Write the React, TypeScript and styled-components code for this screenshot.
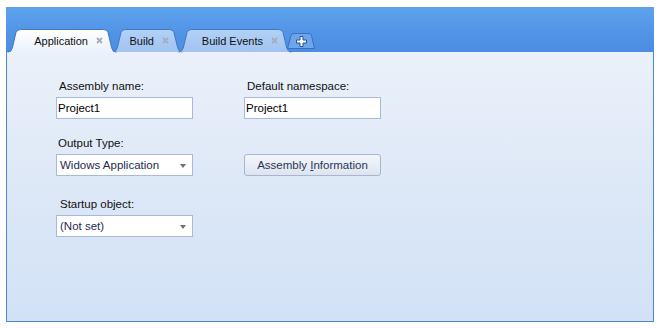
import React from "react";
import styled, { createGlobalStyle } from "styled-components";

const Global = createGlobalStyle`
  html, body { margin: 0; padding: 0; background: #ffffff; }
  body { font-family: "Liberation Sans", Arial, sans-serif; font-size: 11px; }
`;

const Page = styled.div`
  padding: 7px 6px 0 6px;
  width: 659px;
  height: 328px;
  box-sizing: border-box;
`;

const Panel = styled.div`
  width: 648px;
  height: 315px;
  display: flex;
  flex-direction: column;
  box-sizing: border-box;
`;

const Header = styled.div`
  height: 45px;
  background: linear-gradient(#5ea1ed 0%, #5497e8 45%, #4a8de2 100%);
  display: flex;
  align-items: flex-end;
  padding-left: 1px;
`;

const TabStrip = styled.div`
  display: flex;
  align-items: flex-end;
  height: 23px;
`;

const TabBox = styled.div<{ $w: number; $active?: boolean; $first?: boolean }>`
  position: relative;
  width: ${(p) => p.$w}px;
  height: 23px;
  margin-left: ${(p) => (p.$first ? 0 : -5)}px;
  z-index: ${(p) => (p.$active ? 3 : 1)};
  display: flex;
  align-items: center;
  justify-content: flex-end;
  box-sizing: border-box;
  padding-right: 14px;
  gap: 8px;
  color: #101010;
  font-size: 11px;
`;

const TabShape = styled.svg`
  position: absolute;
  left: 0;
  top: 0;
  z-index: -1;
  overflow: visible;
`;

const TabLabel = styled.span`
  position: relative;
  white-space: nowrap;
`;

const CloseIcon = styled.svg`
  position: relative;
  flex: none;
`;

const PlusTab = styled.div`
  position: relative;
  z-index: 0;
  width: 28px;
  height: 16px;
  margin-left: -5px;
  margin-bottom: 3px;
  display: flex;
  align-items: center;
  justify-content: center;
`;

const PlusIcon = styled.svg`
  position: relative;
`;

const Content = styled.div`
  flex: 1;
  background: linear-gradient(#eaf1fa 0%, #dde8f7 50%, #d2e2f6 100%);
  border: 1px solid #4a87d8;
  border-top: none;
  padding: 27px 0 0 49px;
  display: grid;
  grid-template-columns: 137px 137px;
  column-gap: 51px;
  align-content: start;
`;

const Field = styled.div<{ $top?: number }>`
  display: flex;
  flex-direction: column;
  margin-top: ${(p) => p.$top ?? 0}px;
`;

const Label = styled.label<{ $indent?: number; $hidden?: boolean }>`
  font-size: 11.5px;
  line-height: 14px;
  color: #111;
  padding-left: ${(p) => p.$indent ?? 2}px;
  margin-bottom: 4px;
  white-space: nowrap;
  visibility: ${(p) => (p.$hidden ? "hidden" : "visible")};
`;

const TextBox = styled.div`
  height: 22px;
  box-sizing: border-box;
  border: 1px solid #a9bad6;
  background: #ffffff;
  display: flex;
  align-items: center;
  padding-left: 1px;
  font-size: 11.5px;
  color: #000;
`;

const Combo = styled(TextBox)`
  padding-left: 3px;
  padding-right: 6px;
  justify-content: space-between;
  color: #1f2b4d;
`;

const Arrow = styled.span`
  width: 0;
  height: 0;
  border-left: 3.5px solid transparent;
  border-right: 3.5px solid transparent;
  border-top: 4px solid #707070;
  margin-top: 1px;
`;

const Button = styled.div`
  height: 22px;
  box-sizing: border-box;
  border: 1px solid #a7b6ce;
  border-radius: 3px;
  background: linear-gradient(#f3f6fb 0%, #e8eef7 50%, #dce4f0 100%);
  display: flex;
  align-items: center;
  justify-content: center;
  font-size: 11.5px;
  color: #2a3656;
  u { text-decoration: underline; }
`;

function tabPath(w: number, h: number, closed: boolean) {
  const d = `M0.5,${h} C3,${h} 4.5,${h - 1.5} 5.5,${h - 5} L9,3.5 Q10,0.5 13.5,0.5 L${w - 13.5},0.5 Q${w - 10},0.5 ${w - 9},3.5 L${w - 5.5},${h - 5} C${w - 4.5},${h - 1.5} ${w - 3},${h} ${w - 0.5},${h}`;
  return closed ? d + " Z" : d;
}

const Tab: React.FC<{ label: string; w: number; active?: boolean; first?: boolean }> = ({ label, w, active, first }) => {
  const h = 23;
  const id = `g-${label.replace(/\s/g, "")}`;
  return (
    <TabBox $w={w} $active={active} $first={first}>
      <TabShape width={w} height={h} viewBox={`0 0 ${w} ${h}`}>
        <defs>
          <linearGradient id={id} x1="0" y1="0" x2="0" y2="1">
            {active ? (
              <>
                <stop offset="0" stopColor="#ffffff" />
                <stop offset="1" stopColor="#eaf1fa" />
              </>
            ) : (
              <>
                <stop offset="0" stopColor="#b3d1f6" />
                <stop offset="1" stopColor="#a0c3f0" />
              </>
            )}
          </linearGradient>
        </defs>
        <path d={tabPath(w, h + (active ? 1 : 0), true)} fill={`url(#${id})`} stroke="none" />
        <path d={tabPath(w, h, false)} fill="none" stroke={active ? "#4377c4" : "#3f76c6"} strokeWidth="1" />
      </TabShape>
      <TabLabel>{label}</TabLabel>
      <CloseIcon width="7" height="7" viewBox="0 0 7 7">
        <path d="M1,1 L6,6 M6,1 L1,6" stroke="#a3adbb" strokeWidth="1.8" />
      </CloseIcon>
    </TabBox>
  );
};

export default function App() {
  return (
    <>
      <Global />
      <Page>
        <Panel>
          <Header>
            <TabStrip>
              <Tab label="Application" w={110} active first />
              <Tab label="Build" w={71} />
              <Tab label="Build Events" w={114} />
              <PlusTab>
                <TabShape width="28" height="16" viewBox="0 0 28 16">
                  <path
                    d="M0.5,15.5 L4,2.5 Q4.5,0.5 7,0.5 L22,0.5 Q24,0.5 24.5,2.5 L27.5,15.5 Z"
                    fill="#6da5ec"
                    stroke="#3a6fc0"
                  />
                </TabShape>
                <PlusIcon width="11" height="11" viewBox="0 0 11 11">
                  <path
                    d="M4,0.5 H7 V4 H10.5 V7 H7 V10.5 H4 V7 H0.5 V4 H4 Z"
                    fill="#ffffff"
                    stroke="#2c5590"
                    strokeWidth="1"
                  />
                </PlusIcon>
              </PlusTab>
            </TabStrip>
          </Header>
          <Content>
            <Field>
              <Label $indent={3}>Assembly name:</Label>
              <TextBox>Project1</TextBox>
            </Field>
            <Field>
              <Label $indent={3}>Default namespace:</Label>
              <TextBox>Project1</TextBox>
            </Field>
            <Field $top={17}>
              <Label>Output Type:</Label>
              <Combo>
                <span>Widows Application</span>
                <Arrow />
              </Combo>
            </Field>
            <Field $top={17}>
              <Label $hidden>&nbsp;</Label>
              <Button>
                <span>
                  Assembly <u>I</u>nformation
                </span>
              </Button>
            </Field>
            <Field $top={21}>
              <Label $indent={4}>Startup object:</Label>
              <Combo>
                <span>(Not set)</span>
                <Arrow />
              </Combo>
            </Field>
          </Content>
        </Panel>
      </Page>
    </>
  );
}
